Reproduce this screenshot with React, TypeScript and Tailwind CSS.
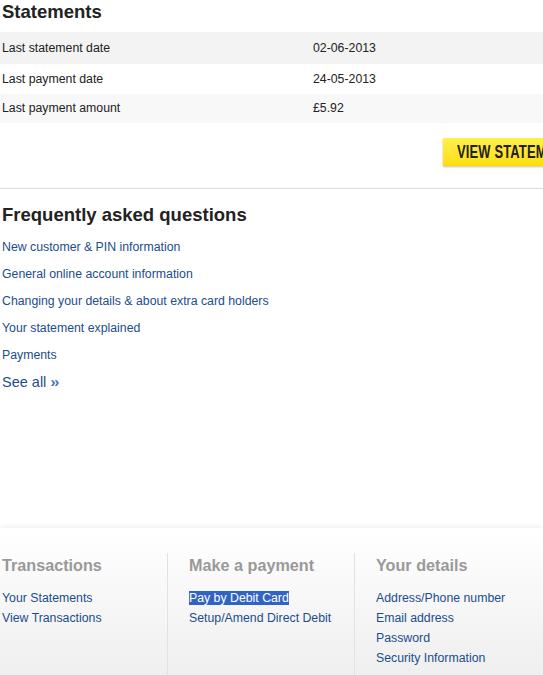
const rows = [
  { label: 'Last statement date', value: '02-06-2013', bg: 'bg-[#f3f3f3]', h: 'h-[32px]' },
  { label: 'Last payment date', value: '24-05-2013', bg: 'bg-white', h: 'h-[30px]' },
  { label: 'Last payment amount', value: '£5.92', bg: 'bg-[#f8f8f8]', h: 'h-[29px]' },
];

const faqs = [
  'New customer & PIN information',
  'General online account information',
  'Changing your details & about extra card holders',
  'Your statement explained',
  'Payments',
];

const footer = [
  { title: 'Transactions', links: ['Your Statements', 'View Transactions'] },
  { title: 'Make a payment', links: ['Pay by Debit Card', 'Setup/Amend Direct Debit'] },
  { title: 'Your details', links: ['Address/Phone number', 'Email address', 'Password', 'Security Information'] },
];

export default function App() {
  return (
    <div className="flex flex-col w-[543px] h-[675px] overflow-hidden bg-white font-['Liberation_Sans',Arial,sans-serif] text-[#222]">
      {/* Statements */}
      <h2 className="px-[2px] pt-[1px] h-[32px] text-[18.5px] font-bold leading-[22px]">Statements</h2>
      <div>
        {rows.map((r) => (
          <div key={r.label} className={`flex items-center px-[2px] text-[12.3px] ${r.h} ${r.bg}`}>
            <span className="w-[311px]">{r.label}</span>
            <span>{r.value}</span>
          </div>
        ))}
      </div>
      <div className="flex justify-start pl-[443px] pt-[15px] h-[65px]">
        <button className="shrink-0 h-[28px] w-[140px] pl-[14px] text-left overflow-hidden whitespace-nowrap bg-gradient-to-b from-[#fff04a] to-[#ffdd00] shadow-[0_1px_2px_rgba(0,0,0,0.25)] text-[#222] leading-[28px]">
          <span className="inline-block origin-left scale-x-[0.72] font-['Liberation_Sans',Arial,sans-serif] font-bold text-[18px] tracking-[0.2px]">
            VIEW STATEMENT
          </span>
        </button>
      </div>
      <div className="h-px bg-[#dcdcdc]" />

      {/* FAQ */}
      <h2 className="px-[2px] pt-[15px] text-[18.5px] font-bold leading-[22px]">Frequently asked questions</h2>
      <ul className="px-[2px] pt-[8px] text-[12.3px] text-[#1c4d8c]">
        {faqs.map((f) => (
          <li key={f} className="h-[27px] leading-[27px]">
            <a href="#">{f}</a>
          </li>
        ))}
        <li className="h-[25px] leading-[25px] text-[14.5px]">
          <a href="#">
            See all <span className="font-bold text-[#3b6fb0] text-[15px] tracking-[-1px]">››</span>
          </a>
        </li>
      </ul>

      {/* Footer */}
      <div className="mt-[134px] flex-1 flex flex-col bg-gradient-to-b from-white to-[#efefef] shadow-[0_-2px_4px_rgba(0,0,0,0.06)] pt-[25px]">
        <div className="flex-1 grid grid-cols-[167px_187px_189px]">
          {footer.map((col, i) => (
            <div
              key={col.title}
              className={`pt-[2px] ${i > 0 ? 'border-l border-[#e2e2e2] pl-[21px]' : 'pl-[2px]'}`}
            >
              <h3 className="text-[16.2px] font-bold text-[#999] leading-[20px] mb-[13px]">{col.title}</h3>
              <ul className="text-[12.3px] text-[#1c4d8c]">
                {col.links.map((l) => (
                  <li key={l} className="h-[20px] leading-[20px]">
                    <a href="#" className={l === 'Pay by Debit Card' ? 'bg-[#3163c3] text-white' : ''}>
                      {l}
                    </a>
                  </li>
                ))}
              </ul>
            </div>
          ))}
        </div>
      </div>
    </div>
  );
}
